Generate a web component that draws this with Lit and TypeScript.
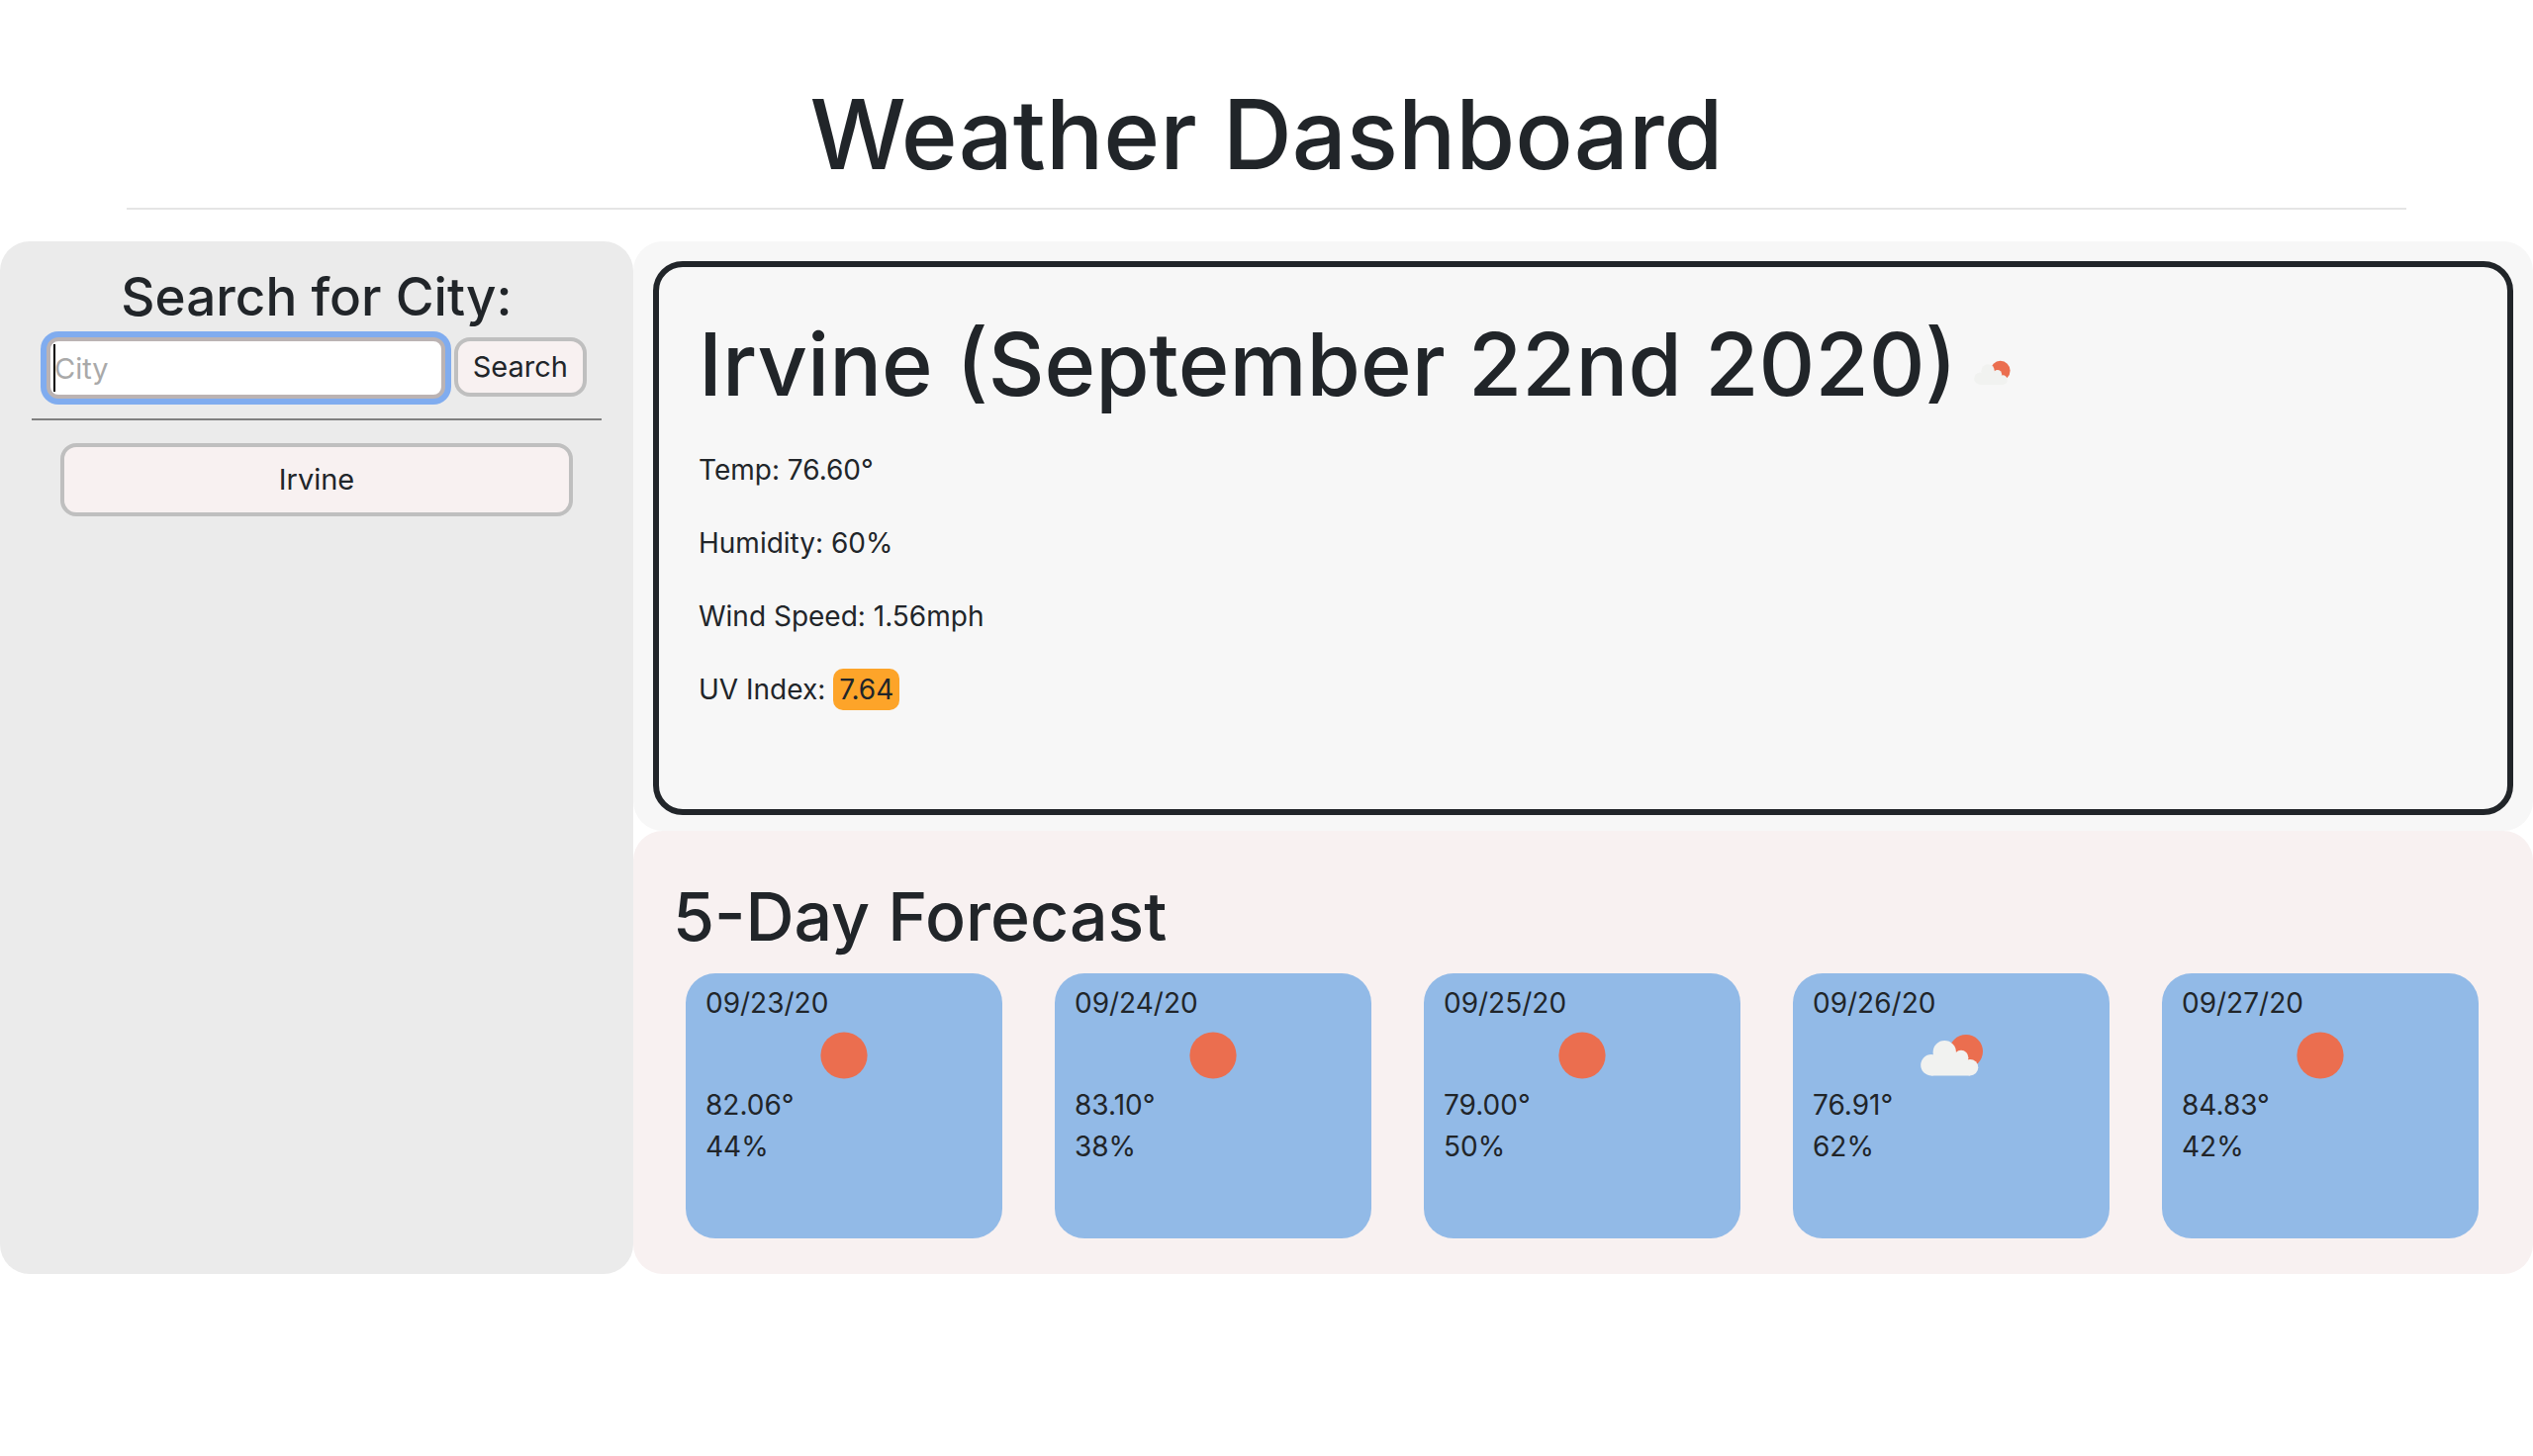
import { LitElement, html, css, svg } from "lit";
import { customElement, property } from "lit/decorators.js";

type Sky = "clear" | "clouds";

interface Day {
  date: string;
  sky: Sky;
  temp: string;
  humidity: string;
}

const DAYS: Day[] = [
  { date: "09/23/20", sky: "clear", temp: "82.06°", humidity: "44%" },
  { date: "09/24/20", sky: "clear", temp: "83.10°", humidity: "38%" },
  { date: "09/25/20", sky: "clear", temp: "79.00°", humidity: "50%" },
  { date: "09/26/20", sky: "clouds", temp: "76.91°", humidity: "62%" },
  { date: "09/27/20", sky: "clear", temp: "84.83°", humidity: "42%" },
];

@customElement("sky-icon")
class SkyIcon extends LitElement {
  @property() sky: Sky = "clear";

  static styles = css`
    :host {
      display: block;
      aspect-ratio: 1;
    }
    .icon {
      display: block;
      width: 100%;
      height: 100%;
    }
    .sun {
      fill: #eb6e4f;
    }
    .cloud {
      fill: #f1f2f0;
    }
  `;

  render() {
    return html`<svg class="icon" viewBox="0 0 100 100" aria-hidden="true">
      ${this.sky === "clear"
        ? svg`<circle class="sun" cx="50" cy="50" r="23.6" />`
        : svg`<circle class="sun" cx="65" cy="46" r="17" />
            <g class="cloud">
              <circle cx="43.3" cy="46.8" r="11.7" />
              <circle cx="29.9" cy="59.8" r="10.7" />
              <circle cx="60" cy="52.2" r="7.4" />
              <circle cx="69" cy="62.2" r="8.3" />
              <path d="M29.9 70.5V56L34 50H60L69 62V70.5z" />
            </g>`}
    </svg>`;
  }
}

@customElement("app-root")
class AppRoot extends LitElement {
  static styles = css`
    :host {
      display: block;
      color: #212529;
      font: 400 28px/42px Inter, "Liberation Sans", sans-serif;
    }
    * {
      box-sizing: border-box;
    }
    h1,
    h2,
    h3,
    p {
      margin: 0;
      font-weight: 500;
    }
    .header {
      margin: 0 5% 32px;
      padding: 74px 0 12px;
      border-bottom: 2px solid #e5e5e5;
      text-align: center;
    }
    .title {
      font-size: 97px;
      line-height: 124px;
    }
    .layout {
      display: grid;
      grid-template-columns: minmax(0, 1fr) minmax(0, 3fr);
    }
    .sidebar {
      padding: 20px 32px;
      border-radius: 30px;
      background: #ebebeb;
    }
    .sidebar-title {
      display: block;
      font-size: 53px;
      font-weight: 500;
      line-height: 72px;
      text-align: center;
    }
    .search {
      display: flex;
      align-items: flex-start;
      gap: 9px;
      padding: 5px 15px 20px;
      border-bottom: 2px solid #808080;
    }
    .field,
    .button {
      border: 4px solid #bfbfbf;
      color: #212529;
      font: inherit;
      font-size: 29px;
    }
    .field {
      flex: 1;
      min-width: 0;
      height: 62px;
      padding: 0 4px;
      border-color: #bbb3b3;
      border-radius: 12px;
      outline: none;
      background: linear-gradient(#000, #000) 3px 3px / 2px 48px no-repeat #fff;
      box-shadow: 0 0 0 6px #80acef;
    }
    .field::placeholder {
      color: #a9a9a9;
      opacity: 1;
    }
    .button {
      border-radius: 16px;
      background: #f8f1f1;
    }
    .button-search {
      height: 60px;
      padding: 0 15px;
    }
    .button-city {
      display: block;
      width: 90%;
      height: 74px;
      margin: 23px auto 0;
    }
    .current {
      padding: 20px 20px 16px;
      border-radius: 30px;
      background: #f7f7f7;
    }
    .current-box {
      padding: 40px 40px 100px;
      border: 6px solid #212529;
      border-radius: 30px;
    }
    .current-title {
      display: flex;
      align-items: center;
      font-size: 88px;
      line-height: 116px;
    }
    .current-icon {
      width: 58px;
      margin: 18px 0 0 6px;
    }
    .reading {
      margin-top: 32px;
      font-weight: 400;
    }
    .reading-first {
      margin-top: 28px;
    }
    .uv {
      display: inline-block;
      padding: 0 6px;
      border-radius: 10px;
      background: #fda429;
    }
    .forecast {
      padding: 40px 55px 36px 53px;
      border-radius: 30px;
      background: #f8f1f1;
    }
    .forecast-title {
      margin: 0 0 12px -13px;
      font-size: 68px;
      line-height: 92px;
    }
    .days {
      display: grid;
      grid-template-columns: repeat(5, 1fr);
      gap: 53px;
    }
    .day {
      padding: 9px 20px 72px;
      border-radius: 30px;
      background: #92bae7;
    }
    .day-icon {
      width: 100px;
      margin: -18px auto -21px;
    }
  `;

  render() {
    return html`
      <header class="header"><h1 class="title">Weather Dashboard</h1></header>
      <main class="layout">
        <aside class="sidebar">
          <label class="sidebar-title" for="city">Search for City:</label>
          <form class="search" @submit=${(e: Event) => e.preventDefault()}>
            <input class="field" id="city" type="text" placeholder="City" />
            <button class="button button-search" type="submit">Search</button>
          </form>
          <button class="button button-city" type="button">Irvine</button>
        </aside>
        <div>
          <section class="current">
            <div class="current-box">
              <h2 class="current-title">
                <span>Irvine (September 22nd 2020)</span>
                <sky-icon class="current-icon" sky="clouds"></sky-icon>
              </h2>
              <p class="reading reading-first">Temp: 76.60°</p>
              <p class="reading">Humidity: 60%</p>
              <p class="reading">Wind Speed: 1.56mph</p>
              <p class="reading">UV Index: <span class="uv">7.64</span></p>
            </div>
          </section>
          <section class="forecast">
            <h3 class="forecast-title">5-Day Forecast</h3>
            <div class="days">
              ${DAYS.map(
                (d) => html`<article class="day">
                  <div>${d.date}</div>
                  <sky-icon class="day-icon" sky=${d.sky}></sky-icon>
                  <div>${d.temp}</div>
                  <div>${d.humidity}</div>
                </article>`
              )}
            </div>
          </section>
        </div>
      </main>
    `;
  }
}
